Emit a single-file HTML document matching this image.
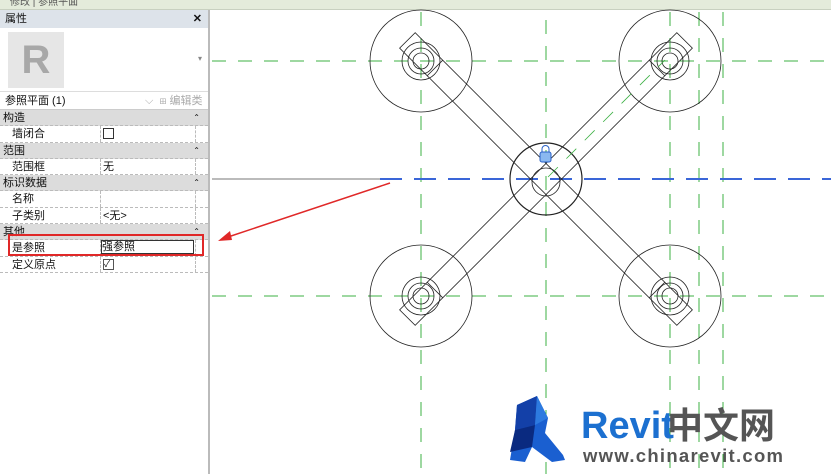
<!DOCTYPE html>
<html><head><meta charset="utf-8"><style>
*{margin:0;padding:0;box-sizing:border-box}
body{width:831px;height:474px;overflow:hidden;background:#fff;font-family:"Liberation Sans","Noto Sans CJK SC",sans-serif;font-size:11px;color:#111;position:relative}
.top{position:absolute;left:0;top:0;width:831px;height:10px;background:#e4ebdb;border-bottom:1px solid #c8d0c0;font-size:10px;color:#555;line-height:6px;padding-left:10px;overflow:hidden}
.panel{position:absolute;left:0;top:10px;width:210px;height:464px;background:#fff;border-right:2px solid #bbb}
.ph{height:18px;background:#dde3ea;line-height:18px;padding-left:5px;position:relative}
.ph b{position:absolute;right:6px;top:0;font-size:11px}
.icon{height:64px;position:relative;border-bottom:1px solid #ddd}
.rbox{position:absolute;left:8px;top:4px;width:56px;height:56px;background:#e6e6e6;font:bold 40px "Liberation Sans",sans-serif;color:#a8a8a8;text-align:center;line-height:56px}
.dd{height:18px;border-bottom:1px solid #ccc;line-height:18px;padding-left:5px;position:relative}
.dd span{position:absolute;left:145px;color:#aaa}
.row{height:16.3px;line-height:16px;position:relative;border-bottom:1px dashed #bbb}
.sec{background:#dcdcdc;padding-left:3px}
.sec i{position:absolute;right:8px;font-style:normal;font-size:8px}
.it{padding-left:12px}
.v{position:absolute;left:100px;top:0;height:100%;border-left:1px dashed #bbb;padding-left:2px;width:96px;border-right:1px dashed #bbb}
</style></head><body>
<div class="top">修改 | 参照平面</div>
<div class="panel">
<div class="ph">属性<b>✕</b></div>
<div class="icon"><div class="rbox">R</div><span style="position:absolute;right:6px;top:26px;color:#888;font-size:8px">▾</span></div>
<div class="dd">参照平面 (1)<span>⌵ &nbsp;⊞ 编辑类型</span></div>
<div class="row sec">构造<i>⌃</i></div>
<div class="row it">墙闭合<div class="v"><div style="width:11px;height:11px;border:1px solid #333;margin-top:2px"></div></div></div>
<div class="row sec">范围<i>⌃</i></div>
<div class="row it">范围框<div class="v">无</div></div>
<div class="row sec">标识数据<i>⌃</i></div>
<div class="row it">名称<div class="v"></div></div>
<div class="row it">子类别<div class="v">&lt;无&gt;</div></div>
<div class="row sec">其他<i>⌃</i></div>
<div class="row it">是参照<div class="v"><div style="border:1px solid #333;height:14px;width:93px;margin-left:-2px;line-height:12px">强参照</div></div></div>
<div class="row it">定义原点<div class="v"><div style="width:11px;height:11px;border:1px solid #555;margin-top:2px;font-size:9px;line-height:9px">✓</div></div></div>
<div style="position:absolute;left:8px;top:224px;width:196px;height:22px;border:2px solid #e02828"></div>
</div>
<svg style="position:absolute;left:0;top:0" width="831" height="474">
<g stroke="#3cb043" stroke-width="1" stroke-dasharray="14,12" fill="none">
<line x1="421" y1="12" x2="421" y2="474"/><line x1="546" y1="20" x2="546" y2="474"/>
<line x1="670" y1="12" x2="670" y2="474"/><line x1="699" y1="12" x2="699" y2="474"/><line x1="723" y1="12" x2="723" y2="474"/>
<line x1="212" y1="61" x2="831" y2="61"/><line x1="212" y1="296" x2="831" y2="296"/>
</g>
<line x1="212" y1="179" x2="380" y2="179" stroke="#777"/>
<line x1="380" y1="179" x2="831" y2="179" stroke="#3a66d8" stroke-width="2" stroke-dasharray="22,12"/>
<g stroke="#222" fill="none" stroke-width="0.8">
<circle cx="421" cy="61" r="51"/><circle cx="670" cy="61" r="51"/><circle cx="421" cy="296" r="51"/><circle cx="670" cy="296" r="51"/>
<circle cx="546" cy="179" r="36" stroke-width="1.2"/><circle cx="546" cy="182" r="14"/>
<circle cx="421" cy="61" r="19"/><circle cx="421" cy="61" r="13"/><circle cx="421" cy="61" r="8"/>
<circle cx="670" cy="61" r="19"/><circle cx="670" cy="61" r="13"/><circle cx="670" cy="61" r="8"/>
<circle cx="421" cy="296" r="19"/><circle cx="421" cy="296" r="13"/><circle cx="421" cy="296" r="8"/>
<circle cx="670" cy="296" r="19"/><circle cx="670" cy="296" r="13"/><circle cx="670" cy="296" r="8"/>
<g transform="translate(546 179) rotate(45)"><rect x="-11" y="-196" width="22" height="392"/><line x1="-11" y1="-157" x2="11" y2="-157"/><line x1="-11" y1="157" x2="11" y2="157"/></g>
<g transform="translate(546 179) rotate(-45)"><rect x="-11" y="-196" width="22" height="392"/><line x1="-11" y1="-157" x2="11" y2="-157"/><line x1="-11" y1="157" x2="11" y2="157"/></g>
</g>
<line x1="548" y1="177" x2="665" y2="60" stroke="#3cb043" stroke-width="0.8" stroke-dasharray="14,12"/>
<rect x="540" y="152" width="11" height="10" rx="2" fill="#8ab8f0" stroke="#2a62c8"/>
<path d="M542 152v-3a3.5 3.5 0 0 1 7 0v3" fill="none" stroke="#2a62c8"/>
<line x1="390" y1="183" x2="228" y2="237" stroke="#e02828" stroke-width="1.5"/>
<path d="M218 241 L230 231 L232 240 Z" fill="#e02828"/>
<path d="M517 405 L537 396 L548 418 L545 433 L563 455 L565 460 L552 462 L532 447 L525 462 L510 460 L515 430 Z" fill="#1a5fd0"/>
<path d="M517 405 L537 396 L535 425 L515 430 Z" fill="#1340a8"/>
<path d="M515 430 L535 425 L532 447 L510 452 Z" fill="#0a2a80"/>
<path d="M537 396 L548 418 L535 425 Z" fill="#2d7ae0"/>
<text x="581" y="438" font-family="Liberation Sans,sans-serif" font-weight="bold" font-size="38" fill="#1c70d0">Revit</text>
<text x="667" y="438" font-family="Noto Sans CJK SC,sans-serif" font-weight="bold" font-size="36" fill="#555">中文网</text>
<text x="583" y="462" font-family="Liberation Sans,sans-serif" font-weight="bold" font-size="18.5" fill="#555" textLength="200">www.chinarevit.com</text>
</svg>
</body></html>
